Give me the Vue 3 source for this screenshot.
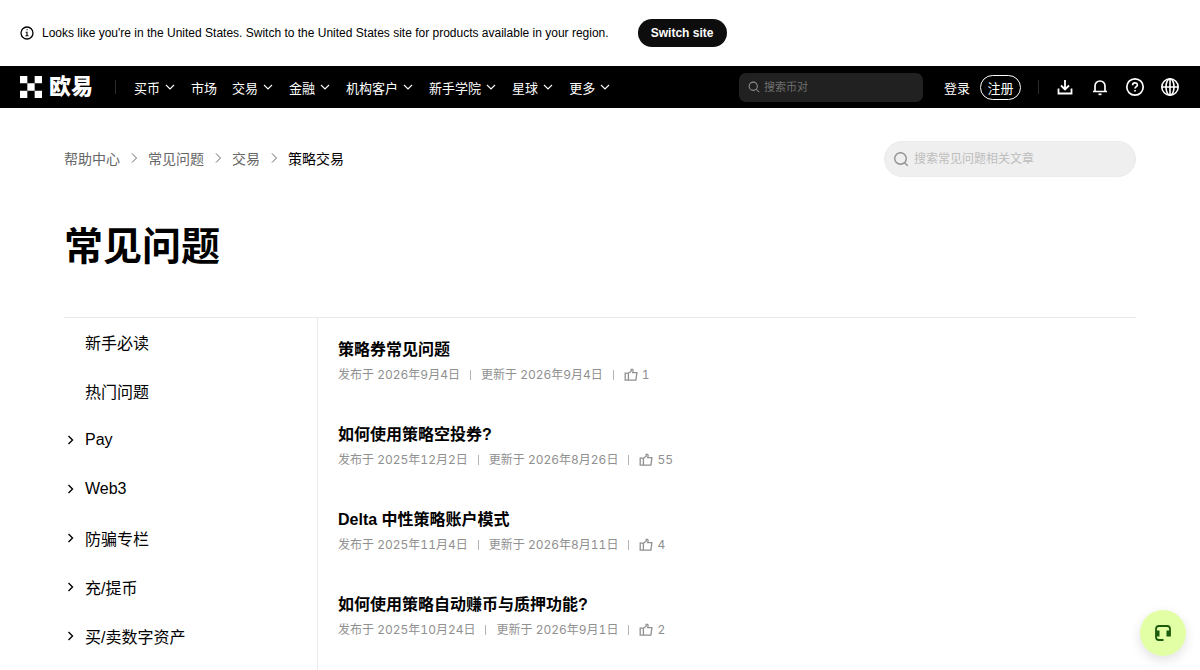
<template>
  <div class="page">
    <div class="banner">
      <svg class="banner-icon" viewBox="0 0 14 14" fill="none" stroke="currentColor">
        <circle cx="7" cy="7" r="6" stroke-width="1.3" />
        <path d="M6.500 3.700h1.200M5.700 6.300H7v3.500M5.500 9.800h3" stroke-width="1.1" />
      </svg>
      <span>Looks like you're in the United States. Switch to the United States site for products available in your region.</span>
      <button class="switch-button">Switch site</button>
    </div>

    <header class="header">
      <a href="#" class="logo">
        <svg class="logo-mark" viewBox="0 0 21 21" fill="currentColor">
          <path d="M0 0h7v7H0zM14 0h7v7h-7zM7 7h7v7H7zM0 14h7v7H0zM14 14h7v7h-7z" />
        </svg>
        <span>欧易</span>
      </a>
      <span class="divider"></span>
      <nav class="nav">
        <a v-for="item in navItems" :key="item.label" href="#" class="nav-item">
          {{ item.label }}
          <svg v-if="item.menu" class="nav-arrow" viewBox="0 0 12 12" fill="none" stroke="currentColor" stroke-width="1.1">
            <path d="m2 4 4 4 4-4" />
          </svg>
        </a>
      </nav>
      <label class="coin-search">
        <svg class="coin-search-icon" viewBox="0 0 16 16" fill="none" stroke="currentColor" stroke-width="1.4">
          <circle cx="7" cy="7" r="5.500" />
          <path d="m11 11 4 4" />
        </svg>
        <input v-model="coinQuery" type="text" placeholder="搜索币对" aria-label="搜索币对" />
      </label>
      <a href="#" class="login">登录</a>
      <button class="register">注册</button>
      <span class="divider tools-divider"></span>
      <div class="tools">
        <button class="tool" aria-label="下载">
          <svg viewBox="0 0 20 20" fill="none" stroke="currentColor" stroke-width="1.8">
            <path d="M10 3v9M6 8.500l4 4 4-4M3.500 11.500v5h13v-5" />
          </svg>
        </button>
        <button class="tool" aria-label="通知">
          <svg viewBox="0 0 20 20" fill="none" stroke="currentColor" stroke-width="1.700">
            <path d="M5 14V9a5 5 0 0 1 10 0v5M3 14.500h14" />
            <path d="M8.500 17.300h3" />
          </svg>
        </button>
        <button class="tool" aria-label="帮助">
          <svg viewBox="0 0 20 20" fill="none" stroke="currentColor" stroke-width="1.700">
            <circle cx="10" cy="10" r="8.200" />
            <path d="M7.600 8.200c0-3 4.800-3 4.800-.2 0 1.700-2.400 1.600-2.400 3.600M10 13v1.600" />
          </svg>
        </button>
        <button class="tool" aria-label="语言">
          <svg viewBox="0 0 20 20" fill="none" stroke="currentColor" stroke-width="1.600">
            <circle cx="10" cy="10" r="8.200" />
            <ellipse cx="10" cy="10" rx="4" ry="8.200" />
            <path d="M2 10h16M10 2v16" />
          </svg>
        </button>
      </div>
    </header>

    <main class="content">
      <div class="top-row">
        <nav class="breadcrumb">
          <template v-for="crumb in crumbs" :key="crumb">
            <a href="#">{{ crumb }}</a>
            <svg class="crumb-arrow" viewBox="0 0 12 12" fill="none" stroke="currentColor">
              <path d="m4 1.500 4.500 4.500L4 10.500" />
            </svg>
          </template>
          <span class="current">策略交易</span>
        </nav>
        <label class="faq-search">
          <svg class="faq-search-icon" viewBox="0 0 16 16" fill="none" stroke="currentColor" stroke-width="1.400">
            <circle cx="7.500" cy="7.500" r="5.800" />
            <path d="m11.700 11.700 3 3" />
          </svg>
          <input v-model="faqQuery" type="text" placeholder="搜索常见问题相关文章" aria-label="搜索常见问题相关文章" />
        </label>
      </div>

      <h1 class="title">常见问题</h1>

      <div class="columns">
        <aside class="sidebar">
          <a v-for="cat in categories" :key="cat.label" href="#" class="category">
            <span class="category-arrow">
              <svg v-if="cat.open" viewBox="0 0 12 12" fill="none" stroke="currentColor" stroke-width="1.400">
                <path d="m4.500 2 4 4-4 4" />
              </svg>
            </span>
            {{ cat.label }}
          </a>
        </aside>

        <section class="articles">
          <article v-for="article in articles" :key="article.title" class="article">
            <h2><a href="#">{{ article.title }}</a></h2>
            <div class="meta">
              <span>发布于 {{ article.published }}</span>
              <span class="meta-line"></span>
              <span>更新于 {{ article.updated }}</span>
              <span class="meta-line"></span>
              <span class="likes">
                <svg viewBox="0 0 14 14" fill="none" stroke="currentColor" stroke-width="1.300">
                  <path d="M1.200 5.200h3.200v7H1.200zM4.400 5.200l2.800-2V1.300h1.400c.8.800.6 2.200.1 3.400h4.200l-1 7.500H4.400" />
                </svg>
                {{ article.likes }}
              </span>
            </div>
          </article>
        </section>
      </div>
    </main>

    <button class="support" aria-label="在线客服">
      <svg viewBox="0 0 18 18" fill="none" stroke="currentColor">
        <path d="M2 7V5Q2 2 5 2h8q3 0 3 3v2M2 11v2q0 3 3 3h4.500" stroke-width="1.800" />
        <path d="M1.100 6.500h4.400v6H1.100zM12.500 6.500h4.400v6h-4.400z" fill="currentColor" stroke="none" />
      </svg>
    </button>
  </div>
</template>

<script setup>
import { ref } from 'vue'

const coinQuery = ref('')
const faqQuery = ref('')

const navItems = [
  { label: '买币', menu: true },
  { label: '市场', menu: false },
  { label: '交易', menu: true },
  { label: '金融', menu: true },
  { label: '机构客户', menu: true },
  { label: '新手学院', menu: true },
  { label: '星球', menu: true },
  { label: '更多', menu: true },
]

const crumbs = ['帮助中心', '常见问题', '交易']

const categories = [
  { label: '新手必读', open: false },
  { label: '热门问题', open: false },
  { label: 'Pay', open: true },
  { label: 'Web3', open: true },
  { label: '防骗专栏', open: true },
  { label: '充/提币', open: true },
  { label: '买/卖数字资产', open: true },
]

const articles = [
  { title: '策略券常见问题', published: '2026年9月4日', updated: '2026年9月4日', likes: 1 },
  { title: '如何使用策略空投券?', published: '2025年12月2日', updated: '2026年8月26日', likes: 55 },
  { title: 'Delta 中性策略账户模式', published: '2025年11月4日', updated: '2026年8月11日', likes: 4 },
  { title: '如何使用策略自动赚币与质押功能?', published: '2025年10月24日', updated: '2026年9月1日', likes: 2 },
]
</script>

<style>
body {
  margin: 0;
  background: #fff;
}
</style>

<style scoped>
.page {
  display: flex;
  flex-direction: column;
  min-height: 100vh;
  font-family: "Liberation Sans", "Noto Sans CJK SC", sans-serif;
  font-size: 13px;
  color: #000;
}

.page * {
  box-sizing: border-box;
}

a {
  color: inherit;
  text-decoration: none;
}

button,
input {
  font-family: inherit;
  padding: 0;
  border: none;
  background: none;
}

button {
  cursor: pointer;
}

input {
  flex: 1;
  min-width: 0;
  outline: none;
}

svg {
  display: block;
  flex: none;
}

.banner {
  display: flex;
  align-items: center;
  height: 66px;
  padding: 0 20px;
  font-size: 12px;
}

.banner-icon {
  width: 14px;
  height: 14px;
  margin-right: 8px;
}

.switch-button {
  width: 89px;
  height: 28px;
  margin-left: 29px;
  border-radius: 14px;
  background: #0d0d0d;
  color: #fff;
  font-size: 12px;
  font-weight: 700;
}

.header {
  display: flex;
  align-items: center;
  height: 42px;
  padding: 0 20px;
  background: #000;
  color: #fff;
}

.logo {
  display: flex;
  align-items: center;
  gap: 7px;
  font-size: 22px;
  line-height: 24px;
  font-weight: 900;
}

.logo-mark {
  width: 22px;
  height: 22px;
}

.divider {
  width: 1px;
  height: 14px;
  margin: 0 18px 0 22px;
  background: #2b2b2b;
}

.nav {
  display: flex;
  gap: 15px;
  white-space: nowrap;
}

.nav-item {
  display: flex;
  align-items: center;
  gap: 4px;
}

.nav-arrow {
  width: 12px;
  height: 12px;
}

.coin-search {
  display: flex;
  align-items: center;
  gap: 4px;
  width: 184px;
  height: 29px;
  margin-left: auto;
  padding: 0 9px;
  border-radius: 7px;
  background: #212121;
  color: #909090;
}

.coin-search-icon {
  width: 12px;
  height: 12px;
}

.coin-search input {
  color: #fff;
  font-size: 11px;
}

.coin-search input::placeholder {
  color: #707070;
}

.login {
  margin: 0 10px 0 21px;
}

.register {
  width: 41px;
  height: 25px;
  border: 1px solid #fff;
  border-radius: 13px;
  color: #fff;
  font-size: 13px;
}

.tools-divider {
  margin: 0 16px 0 17px;
}

.tools {
  display: flex;
  gap: 15px;
}

.tool {
  width: 20px;
  height: 20px;
  color: #fff;
}

.content {
  display: flex;
  flex: 1;
  flex-direction: column;
  padding: 33px 64px 0;
}

.top-row {
  display: flex;
  align-items: center;
  justify-content: space-between;
}

.breadcrumb {
  display: flex;
  align-items: center;
  gap: 8px;
  padding-bottom: 2px;
  font-size: 14px;
  color: #666;
}

.crumb-arrow {
  width: 12px;
  height: 12px;
}

.current {
  color: #000;
}

.faq-search {
  display: flex;
  align-items: center;
  gap: 5px;
  width: 252px;
  height: 36px;
  padding: 0 8px;
  border: 1px solid #ebebeb;
  border-radius: 18px;
  background: #efefef;
  color: #909090;
}

.faq-search-icon {
  width: 16px;
  height: 16px;
}

.faq-search input {
  color: #000;
  font-size: 12px;
}

.faq-search input::placeholder {
  color: #bdbdbd;
}

.title {
  margin: 44px 0;
  font-size: 39px;
  line-height: 52px;
  font-weight: 700;
}

.columns {
  display: flex;
  flex: 1;
  border-top: 1px solid #ebebeb;
}

.sidebar {
  width: 254px;
  border-right: 1px solid #ebebeb;
}

.category {
  display: flex;
  align-items: center;
  height: 49px;
  padding-bottom: 2px;
  font-size: 16px;
}

.category-arrow {
  width: 21px;
}

.category-arrow svg {
  width: 12px;
  height: 12px;
}

.articles {
  flex: 1;
  padding: 20px 20px 0;
}

.article {
  height: 85px;
}

.article h2 {
  margin: 0 0 4px;
  font-size: 16px;
  line-height: 24px;
  font-weight: 700;
}

.meta {
  display: flex;
  align-items: center;
  gap: 10px;
  font-family: Inter, "Noto Sans CJK SC", sans-serif;
  font-size: 12px;
  font-variant-numeric: tabular-nums;
  line-height: 18px;
  color: #909090;
}

.meta-line {
  width: 1px;
  height: 10px;
  background: #b5b5b5;
}

.likes {
  display: flex;
  align-items: center;
  gap: 4px;
}

.likes svg {
  width: 14px;
  height: 14px;
}

.support {
  position: fixed;
  right: 14px;
  bottom: 14px;
  display: flex;
  align-items: center;
  justify-content: center;
  width: 46px;
  height: 46px;
  border-radius: 50%;
  background: #e3ffa6;
  color: #1c5a0c;
  box-shadow: 0 4px 12px rgba(0, 0, 0, 0.12);
}

.support svg {
  width: 18px;
  height: 18px;
}
</style>
